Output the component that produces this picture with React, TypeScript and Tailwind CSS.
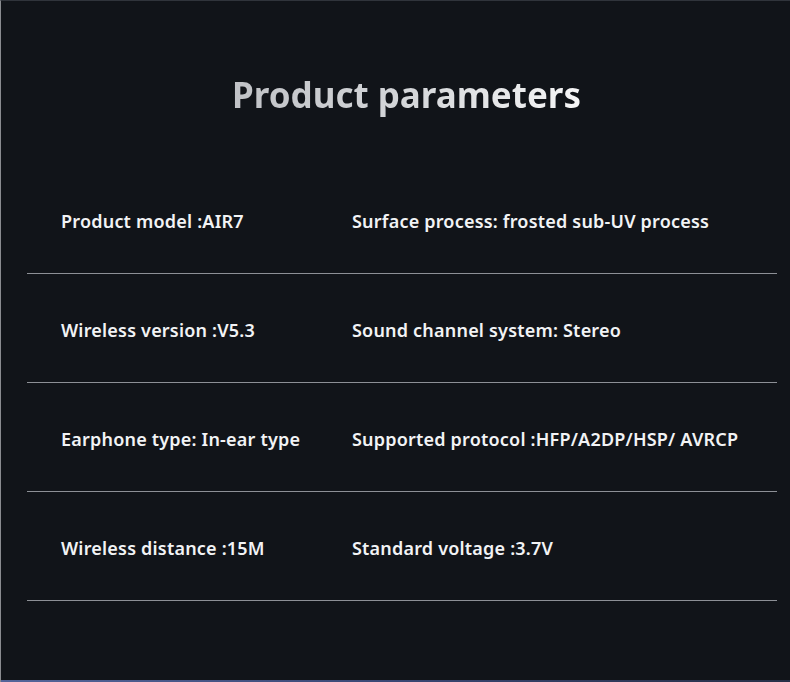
const rows = [
  ["Product model :AIR7", "Surface process: frosted sub-UV process"],
  ["Wireless version :V5.3", "Sound channel system: Stereo"],
  ["Earphone type: In-ear type", "Supported protocol :HFP/A2DP/HSP/ AVRCP"],
  ["Wireless distance :15M", "Standard voltage :3.7V"],
];

export default function App() {
  return (
    <div
      className="w-[790px] h-[682px] bg-[#111419] border-t border-t-[#30343b] border-l border-l-[#8a8c90] flex flex-col relative overflow-hidden"
      style={{ fontFamily: '"Noto Sans", "Open Sans", sans-serif' }}
    >
      <h1 className="mt-[72px] h-[44px] pl-[22px] text-center text-[35px] leading-[44px] font-bold">
        <span className="bg-gradient-to-r from-[#c0c2c6] via-[#d4d6d9] to-[#f6f6f7] bg-clip-text text-transparent">
          Product parameters
        </span>
      </h1>
      <ul className="mt-[48px] ml-[26px] w-[750px]">
        {rows.map(([left, right]) => (
          <li
            key={left}
            className="h-[109px] border-b border-b-[#8d9096] pt-[44px] flex text-[18px] leading-[24px] tracking-[0.2px] font-semibold text-[#f2f3f5]"
          >
            <span className="w-[325px] pl-[34px] shrink-0">{left}</span>
            <span className="whitespace-nowrap">{right}</span>
          </li>
        ))}
      </ul>
      <div className="absolute bottom-0 left-0 right-0 h-[2px] bg-gradient-to-r from-[#55659a] via-[#3a4774] to-[#283048]" />
    </div>
  );
}
